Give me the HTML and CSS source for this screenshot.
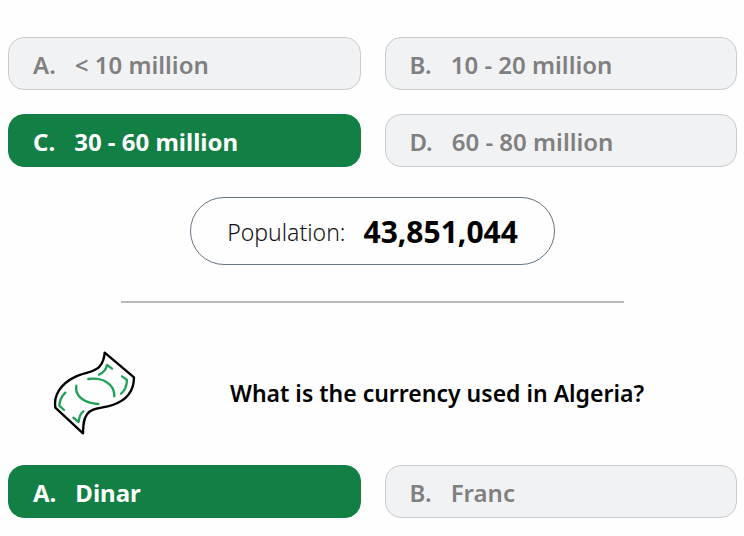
FILE: index.html
```html
<!DOCTYPE html>
<html lang="en">

<head>
    <meta charset="UTF-8">
    <meta name="viewport" content="width=device-width, initial-scale=1.0">
    <title>Algeria quiz</title>
    <link rel="stylesheet" href="styles.css">
</head>

<body>
    <main class="quiz">

        <div class="answers">
            <button type="button" class="answer"><span>A.</span> <span>&lt; 10 million</span></button>
            <button type="button" class="answer"><span>B.</span> <span>10 - 20 million</span></button>
            <button type="button" class="answer correct"><span>C.</span> <span>30 - 60 million</span></button>
            <button type="button" class="answer"><span>D.</span> <span>60 - 80 million</span></button>
        </div>

        <p class="result">Population: <strong>43,851,044</strong></p>

        <hr class="divider">

        <div class="question">
            <svg class="banknote" viewBox="0 0 300 285" fill="none" stroke-width="7" stroke-linecap="round" stroke-linejoin="round" aria-hidden="true">
                <path stroke="#000" d="M179 23 L267 97 C267 143 239 168 203 180 C169 192 142 186 126 208 C114 225 115 242 114 265 L31 188 C25 151 48 117 86 98 C119 80 148 85 165 63 C176 49 178 39 179 23 Z" />
                <g stroke="#22a259">
                    <path d="M130 102 C172 97 209 115 208 154" />
                    <path d="M94 122 C88 156 121 174 160 177" />
                    <path d="M162 89 C175 83 183 75 186 60 L201 71" />
                    <path d="M231 94 L246 105 C245 124 240 137 228 146" />
                    <path d="M61 143 C48 156 43 168 43 182 L57 195" />
                    <path d="M115 199 C104 207 102 217 101 231 L85 218" />
                </g>
            </svg>
            <h2>What is the currency used in Algeria?</h2>
        </div>

        <div class="answers">
            <button type="button" class="answer correct"><span>A.</span> <span>Dinar</span></button>
            <button type="button" class="answer"><span>B.</span> <span>Franc</span></button>
        </div>

    </main>
</body>

</html>
```
FILE: styles.css
```css
* {
    box-sizing: border-box;
}

body {
    margin: 0;
    background-color: #fefefe;
    color: #000;
    font-family: "Segoe UI", "Noto Sans", "Open Sans", sans-serif;
}

.quiz {
    padding: 37px 7px 16px 8px;
}

.answers {
    display: grid;
    grid-template-columns: 1fr 1fr;
    gap: 24px;
}

.answer {
    display: flex;
    align-items: center;
    gap: 19px;
    padding: 10px 24px 8px;
    border: 1px solid #c9cbcc;
    border-radius: 16px;
    background-color: #f1f2f4;
    color: #808080;
    font-family: inherit;
    font-size: 24px;
    font-weight: 600;
    line-height: 33px;
    cursor: pointer;
}

.answer.correct {
    border-color: #128044;
    background-color: #128044;
    color: #fff;
    font-weight: 700;
}

.result {
    display: flex;
    align-items: center;
    gap: 18px;
    width: fit-content;
    margin: 30px auto 36px;
    padding: 14px 36px 12px;
    border: 1px solid #667480;
    border-radius: 34px;
    color: #111;
    font-size: 23px;
    font-weight: 300;
    line-height: 40px;
}

.result strong {
    color: #000;
    font-size: 30px;
    font-weight: 700;
}

.divider {
    width: 69%;
    margin: 0 auto;
    border: 0;
    border-top: 2px solid #b9b9b9;
}

.question {
    display: flex;
    align-items: center;
    gap: 85px;
    margin: 42px 0 25px 37px;
}

.banknote {
    flex: none;
    width: 100px;
    height: 95px;
}

.question h2 {
    margin: 0;
    font-size: 23px;
    font-weight: 600;
    line-height: 32px;
}
```
